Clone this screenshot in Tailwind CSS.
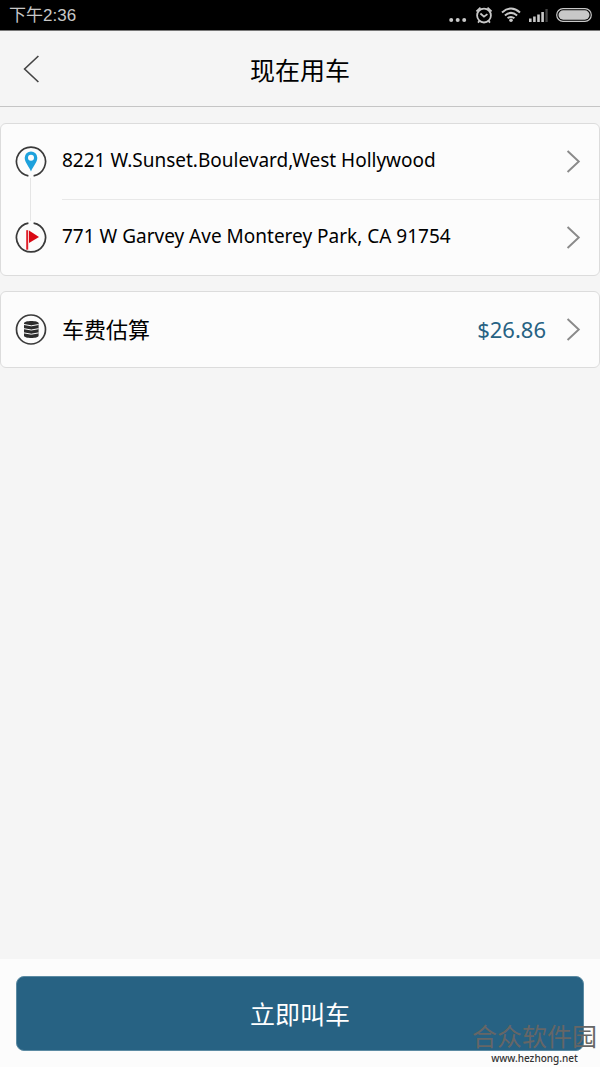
<!DOCTYPE html>
<html lang="zh-CN">
<head>
<meta charset="utf-8">
<meta name="viewport" content="width=device-width, initial-scale=1">
<title>现在用车</title>
<script src="https://cdn.jsdelivr.net/npm/@tailwindcss/browser@4"></script>
</head>
<body class="flex min-h-screen flex-col bg-[#f5f5f5] font-['Noto_Sans','Noto_Sans_CJK_SC',sans-serif] text-black">
  <!-- Status bar -->
  <div class="flex h-[31px] items-center justify-between border-b border-[#777] bg-black pr-2 pl-[9px] text-[#c8c8c8]">
    <span class="pt-px font-['Liberation_Sans','Noto_Sans_CJK_SC',sans-serif] text-[17px] leading-6">下午2:36</span>
    <div class="flex items-center">
      <svg class="mr-2 h-6 w-[18px]" viewBox="0 0 18 24" fill="currentColor"><circle cx="2.2" cy="17" r="2"/><circle cx="8.7" cy="17" r="2"/><circle cx="15.2" cy="17" r="2"/></svg>
      <svg class="mr-2 h-6 w-[18px]" viewBox="0 0 18 24" fill="none" stroke="currentColor" stroke-width="1.8"><circle cx="9" cy="12.6" r="6.9"/><path d="M5.4 10.5 9 13.7l3.4-2.6M1.5 8.5 5.5 4.6M16.5 8.5l-4-3.9"/><path d="M4.5 18 3 19.7M13.5 18l1.5 1.7"/></svg>
      <svg class="mr-2 h-6 w-5" viewBox="0 0 20 24" fill="none" stroke="currentColor" stroke-width="2"><path d="M1 9.4Q10 1.6 19 9.4M3.9 12.4q6.1-5.1 12.2 0M6.6 15.3q3.4-2.7 6.8 0"/><circle cx="10" cy="17.3" r="1.8" fill="currentColor" stroke="none"/></svg>
      <svg class="mr-2 h-6 w-[19px]" viewBox="0 0 19 24" fill="currentColor"><path d="M0 15.5h2.6V19H0zM4.1 13.5h2.6V19H4.1zM8.2 11.5h2.6V19H8.2zM12.3 9h2.6v10h-2.6z"/><path fill="#444" d="M16.4 6h2.3v13h-2.3z"/></svg>
      <svg class="h-6 w-9" viewBox="0 0 36 24"><rect x=".7" y="5.7" width="34.6" height="12.6" rx="6.3" fill="none" stroke="currentColor" stroke-width="1.2"/><rect x="2.5" y="7.3" width="31" height="9.4" rx="4.7" fill="currentColor"/></svg>
    </div>
  </div>

  <header class="grid h-[76px] grid-cols-[1fr_auto_1fr] items-center border-b border-[#c5c5c5]">
    <button type="button" aria-label="返回" class="flex h-12 w-12 items-center pl-[23px]">
      <svg class="h-7 w-4 shrink-0" viewBox="0 0 16 28" fill="none" stroke="#444" stroke-width="1.6"><path d="M15.4 1 1.6 14l13.8 13"/></svg>
    </button>
    <h1 class="pt-0.5 text-[25px] leading-9">现在用车</h1>
  </header>

  <main class="flex flex-1 flex-col gap-[15px] pt-4">
    <section class="relative rounded-md border border-[#dcdcdc] bg-[#fcfcfc]">
      <a href="#pickup" class="flex h-[75px] items-center pl-[14px]">
        <svg class="mr-[15px] h-[33px] w-8 shrink-0" viewBox="0 0 32 32"><path d="M18.6 30.3a14.5 14.5 0 1 0-5.2 0" fill="none" stroke="#3a3a3a" stroke-width="1.7"/><path fill="#1da1dc" fill-rule="evenodd" d="M16 6a6.3 6.3 0 0 0-6.3 6.3c0 4.5 3.7 7.8 6.3 13.7 2.6-5.9 6.3-9.2 6.3-13.7A6.3 6.3 0 0 0 16 6Zm0 3.3a3 3 0 1 1 0 6 3 3 0 0 1 0-6Z"/></svg>
        <span class="flex flex-1 items-center justify-between pr-[18px]">
          <span class="pb-[3px] text-[19px] leading-6">8221 W.Sunset.Boulevard,West Hollywood</span>
          <svg class="h-[23px] w-[15px]" viewBox="0 0 15 24" fill="none" stroke="#8a8a8a" stroke-width="2"><path d="M1.3 1 13 12 1.3 23"/></svg>
        </span>
      </a>
      <a href="#destination" class="flex items-center pl-[14px]">
        <svg class="mr-[15px] h-[33px] w-8 shrink-0" viewBox="0 0 32 32"><path d="M13.4 1.7a14.5 14.5 0 1 0 5.2 0" fill="none" stroke="#3a3a3a" stroke-width="1.7"/><path fill="#e0202a" d="M11.2 8.7h2v19.5h-2z"/><path fill="#d90914" d="M14 9 24 15.4 14 21.6z"/></svg>
        <span class="flex h-[76px] flex-1 items-center justify-between border-t border-[#e8e8e8] pr-[18px]">
          <span class="pb-[3px] text-[19px] leading-6">771 W Garvey Ave Monterey Park, CA 91754</span>
          <svg class="h-[23px] w-[15px]" viewBox="0 0 15 24" fill="none" stroke="#8a8a8a" stroke-width="2"><path d="M1.3 1 13 12 1.3 23"/></svg>
        </span>
      </a>
      <!-- Route line joining the two stops -->
      <span class="absolute top-[54px] bottom-[54px] left-[29px] w-px bg-[#e5e5e5]"></span>
    </section>

    <section class="rounded-md border border-[#dcdcdc] bg-[#fcfcfc]">
      <a href="#fare" class="flex h-[75px] items-center pr-[18px] pl-[14px]">
        <svg class="mr-[15px] h-[33px] w-8 shrink-0" viewBox="0 0 32 32"><circle cx="16" cy="16" r="14.5" fill="none" stroke="#3a3a3a" stroke-width="1.7"/><path fill="#2d2d2d" d="M9 9.7c0-3 14.6-3 14.6 0v12.6c0 3-14.6 3-14.6 0z"/><path d="M9 11q7.3 2.6 14.6 0M9 15.2q7.3 2.6 14.6 0M9 19.4q7.3 2.6 14.6 0" fill="none" stroke="#fcfcfc" stroke-width="1"/></svg>
        <span class="pb-px text-[22px] leading-8">车费估算</span>
        <span class="mr-5 ml-auto pb-0.5 text-[22px] leading-8 text-[#276283]">$26.86</span>
        <svg class="h-[23px] w-[15px]" viewBox="0 0 15 24" fill="none" stroke="#8a8a8a" stroke-width="2"><path d="M1.3 1 13 12 1.3 23"/></svg>
      </a>
    </section>
  </main>

  <footer class="relative bg-[#fcfcfc] px-4 pt-[17px] pb-4">
    <button type="button" class="h-[75px] w-full rounded-lg border border-[#5c8ba3] bg-[#276283] pt-px text-[25px] leading-9 text-white">立即叫车</button>
    <!-- Site watermark -->
    <div class="pointer-events-none absolute right-[3px] bottom-0.5 flex flex-col items-center text-[#666]">
      <span class="text-[25px] leading-[30px]">合众软件园</span>
      <span class="font-['Noto_Sans',sans-serif] text-[10px] leading-[14px] font-medium text-[#333]">www.hezhong.net</span>
    </div>
  </footer>
</body>
</html>
